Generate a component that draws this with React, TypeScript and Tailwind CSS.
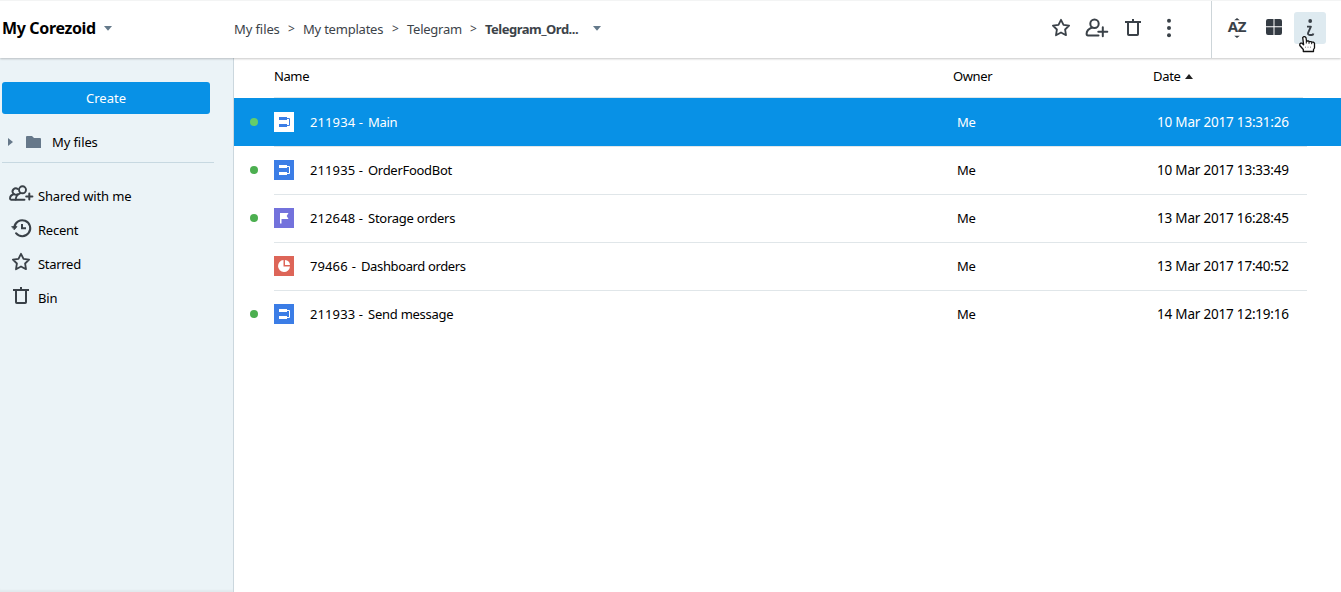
import React from 'react';

type Kind = 'process' | 'state' | 'dashboard';

interface FileRow {
  id: string;
  title: string;
  idClass: string;
  titleClass: string;
  kind: Kind;
  online: boolean;
  date: string;
  selected?: boolean;
}

const rows: FileRow[] = [
  { id: '211934', title: 'Main', idClass: 'w-[58px]', titleClass: 'tracking-[-0.3px]', kind: 'process', online: true, date: '10 Mar 2017 13:31:26', selected: true },
  { id: '211935', title: 'OrderFoodBot', idClass: 'w-[58px]', titleClass: 'tracking-[-0.3px]', kind: 'process', online: true, date: '10 Mar 2017 13:33:49' },
  { id: '212648', title: 'Storage orders', idClass: 'w-[58px]', titleClass: 'tracking-[-0.25px]', kind: 'state', online: true, date: '13 Mar 2017 16:28:45' },
  { id: '79466', title: 'Dashboard orders', idClass: 'w-[51px]', titleClass: 'tracking-[-0.37px]', kind: 'dashboard', online: false, date: '13 Mar 2017 17:40:52' },
  { id: '211933', title: 'Send message', idClass: 'w-[58px]', titleClass: 'tracking-[-0.25px]', kind: 'process', online: true, date: '14 Mar 2017 12:19:16' },
];

const stroke = {
  fill: 'none',
  stroke: '#3a4148',
  strokeWidth: 2,
  strokeLinecap: 'round' as const,
  strokeLinejoin: 'round' as const,
};

function Caret({ className }: { className: string }) {
  return (
    <svg className={className} width="8" height="5" viewBox="0 0 8 5">
      <path d="M0 0h8L4 4.8z" fill="#64798a" />
    </svg>
  );
}

function StarIcon() {
  return (
    <svg width="20" height="20" viewBox="0 0 20 20" {...stroke} strokeWidth={1.8}>
      <path d="M10 1.8l2.5 5 5.6.8-4 3.9.9 5.7-5-2.7-5 2.7.9-5.7-4-3.9 5.600-.8z" />
    </svg>
  );
}

function BinIcon() {
  return (
    <svg width="18" height="20" viewBox="0 0 18 20" {...stroke} strokeLinecap="butt">
      <path d="M1 4h16M9 1v3" />
      <path d="M4 4v12.200a.8.8 0 0 0 .8.8h8.400a.8.8 0 0 0 .8-.8V4" />
    </svg>
  );
}

function UserPlusIcon() {
  return (
    <svg width="24" height="20" viewBox="0 0 24 20" {...stroke}>
      <circle cx="9.500" cy="5.800" r="4.200" />
      <path d="M7 9.500C3.500 11 1.600 13.200 1.600 15.800c0 1.200.4 1.700 1.400 1.700h10.500" />
      <path d="M17.800 9.200v9M13.300 13.700h9" />
    </svg>
  );
}

function SharedIcon() {
  return (
    <svg width="26" height="18" viewBox="0 0 26 18" {...stroke} strokeWidth={1.9}>
      <circle cx="14.500" cy="4.800" r="3.500" />
      <path d="M9.800 4A3.200 3.200 0 1 0 9.500 9.200" />
      <path d="M6 9C3.500 9.800 2 11.500 2 13.500c0 .8.3 1.200 1.100 1.200h13.400" />
      <path d="M12.500 8.200c-2.700 1-4.500 2.600-4.800 6.300" />
      <path d="M21.300 8.600v6M18.200 11.600h6.200" strokeWidth="2" />
    </svg>
  );
}

function RecentIcon() {
  return (
    <svg width="22" height="20" viewBox="0 0 22 20" {...stroke}>
      <path d="M3.300 9.300A8 8 0 1 1 5 15.200" />
      <path d="M11 6v4.300h4" strokeLinecap="butt" strokeLinejoin="miter" />
      <path d="M1 8.600h5L3.500 11.600z" fill="#3a4148" strokeWidth=".8" />
    </svg>
  );
}

function SortIcon() {
  return (
    <div className="relative flex h-5 w-5 items-center justify-center">
      <span className="pb-[3px] font-['Noto_Sans','Open_Sans',sans-serif] text-[15px] leading-5 font-bold tracking-[-0.2px] text-[#3a4148]">AZ</span>
      <svg className="absolute inset-0" width="20" height="20" viewBox="0 0 20 20" fill="#3a4148">
        <path d="M7.200 2.300L10 0l2.800 2.300zM7.200 17.700h5.600L10 20z" />
      </svg>
    </div>
  );
}

function GridIcon() {
  return (
    <svg width="16" height="16" viewBox="0 0 16 16" fill="#343b43">
      <path d="M2 0h5.500v7.300H0V2a2 2 0 0 1 2-2zM8.500 0H14a2 2 0 0 1 2 2v5.300H8.500zM0 8.300h7.500V16H2a2 2 0 0 1-2-2zM8.500 8.300H16V14a2 2 0 0 1-2 2H8.500z" />
    </svg>
  );
}

function InfoIcon() {
  return (
    <svg width="10" height="18" viewBox="0 0 10 18" {...stroke}>
      <circle cx="5.200" cy="2" r="1.900" fill="#3a4148" stroke="none" />
      <path d="M2 7.600h3.900L3.200 13.600c-.5 1.500 0 2.400 1.500 2.400h2c1 0 1.500-.4 1.700-1.500" strokeLinecap="butt" strokeWidth="1.900" />
    </svg>
  );
}

function HandCursor() {
  return (
    <svg className="absolute top-6 left-[5px]" width="17" height="17" viewBox="0 0 17 17">
      <path
        d="M3.700 1.500L4.700.7H6L7 1.700 7.500 5h2l.8.600H12l.8.600h1.700l1 1V12l-1 1.500v2H4.300v-2L.8 9.500V8l.8-.8H3l1.600 1.500z"
        fill="#fff"
        stroke="#111"
        strokeWidth="1.300"
        strokeLinejoin="round"
      />
      <path d="M7.300 5v2.500M10 5.600v2.200M12.700 6.200v2" stroke="#111" strokeWidth="1" />
      <path d="M6.500 10.500V12M9 10.500V12M11.500 10.500V12" stroke="#aaa" strokeWidth="1" />
    </svg>
  );
}

function KindIcon({ kind, selected }: { kind: Kind; selected?: boolean }) {
  if (kind === 'process') {
    const bg = selected ? '#fff' : '#3b7de6';
    const fg = selected ? '#3b7de6' : '#fff';
    return (
      <svg width="20" height="20" viewBox="0 0 20 20">
        <path d="M0 0h20v20H0z" fill={bg} />
        <path d="M5 5h8v3H5zM5 12h8v3H5z" fill={fg} />
        <path d="M13 6.500h2.500v7H13" fill="none" stroke={fg} />
      </svg>
    );
  }
  if (kind === 'state') {
    return (
      <svg width="20" height="20" viewBox="0 0 20 20">
        <path d="M0 0h20v20H0z" fill="#7372dc" />
        <path d="M6 5h8.500l-1.800 3 1.800 3H7.500v4.500H6z" fill="#fff" />
      </svg>
    );
  }
  return (
    <svg width="20" height="20" viewBox="0 0 20 20">
      <path d="M0 0h20v20H0z" fill="#dd6558" />
      <path d="M9.500 4v6.500H16A6 6 0 1 1 9.500 4z" fill="#fff" />
      <path d="M11 4a5.500 5.500 0 0 1 5 5h-5z" fill="#fff" />
    </svg>
  );
}

function NavItem({ icon, label, className }: { icon: React.ReactNode; label: string; className: string }) {
  return (
    <li className="flex h-[34px] items-center">
      <span className="flex w-[38px] shrink-0 items-center pb-[5px] pl-2">{icon}</span>
      <span className={className}>{label}</span>
    </li>
  );
}

export default function App() {
  return (
    <div className="flex h-[592px] w-[1341px] flex-col overflow-hidden bg-white font-['Noto_Sans','Open_Sans',sans-serif] text-[13px] leading-5 text-black">
      <header className="z-10 flex h-[58px] shrink-0 border-t border-[#f3f4f4] bg-white shadow-[0_1px_2px_rgba(0,0,0,0.22)]">
        <div className="flex w-[234px] items-center pb-[3px] pl-0.5">
          <span className="text-base font-bold tracking-[-0.35px] whitespace-nowrap">My Corezoid</span>
          <Caret className="ml-2" />
        </div>
        <nav className="flex flex-1 items-center pb-0.5 whitespace-nowrap text-[#3c4349]">
          <span className="w-[54px] tracking-[-0.1px]">My files</span>
          <span className="w-[15px] text-xs">&gt;</span>
          <span className="w-[89px] tracking-[-0.22px]">My templates</span>
          <span className="w-[15px] text-xs">&gt;</span>
          <span className="w-[63px] tracking-[-0.25px]">Telegram</span>
          <span className="w-[15px] text-xs">&gt;</span>
          <span className="w-[108px] font-bold tracking-[-0.5px]">Telegram_Ord...</span>
          <Caret className="mb-px" />
        </nav>
        <div className="flex w-[160px] items-center pb-[3px]">
          <span className="flex w-[34px]"><StarIcon /></span>
          <span className="flex w-[39px]"><UserPlusIcon /></span>
          <span className="flex w-9"><BinIcon /></span>
          <svg width="18" height="20" viewBox="0 0 18 20" fill="#3a4148">
            <circle cx="9" cy="2.800" r="2" /><circle cx="9" cy="10" r="2" /><circle cx="9" cy="17.200" r="2" />
          </svg>
        </div>
        <div className="flex w-[130px] items-center border-l border-[#cdd5d9] pb-[3px] pl-[15px]">
          <span className="flex w-[39px] pb-px"><SortIcon /></span>
          <span className="flex w-7 pb-0.5"><GridIcon /></span>
          <button className="relative flex h-8 w-8 items-center justify-center rounded-[3px] bg-[#deeaf0]">
            <InfoIcon />
            <HandCursor />
          </button>
        </div>
      </header>

      <div className="flex flex-1">
        <aside className="w-[234px] border-r border-[#cbd7de] bg-[#ebf3f7] pt-6 shadow-[inset_0_-3px_2px_-1px_rgba(0,0,0,0.04)]">
          <button className="ml-0.5 flex h-8 w-52 items-center justify-center rounded-[3px] bg-[#0891e6] pb-px text-white">Create</button>
          <div className="ml-0.5 flex h-[49px] w-[212px] items-center border-b border-[#c7d8e1] pt-2 pl-1.5">
            <svg width="5" height="8" viewBox="0 0 5 8"><path d="M0 0l5 4-5 4z" fill="#66788a" /></svg>
            <svg className="ml-[13px]" width="15" height="12" viewBox="0 0 15 12">
              <path d="M0 1a1 1 0 0 1 1-1h5l2 2h6a1 1 0 0 1 1 1v9H0z" fill="#66788a" />
            </svg>
            <span className="ml-[11px] tracking-[-0.1px]">My files</span>
          </div>
          <ul className="pt-4">
            <NavItem icon={<SharedIcon />} label="Shared with me" className="tracking-[-0.15px]" />
            <NavItem icon={<span className="pl-[3px]"><RecentIcon /></span>} label="Recent" className="tracking-[-0.25px]" />
            <NavItem icon={<span className="pl-[3px]"><StarIcon /></span>} label="Starred" className="tracking-[-0.3px]" />
            <NavItem icon={<span className="pl-1"><BinIcon /></span>} label="Bin" className="tracking-[-0.1px]" />
          </ul>
        </aside>

        <main className="flex-1">
          <div className="mr-[38px] ml-10 flex h-10 items-center border-b border-[#dfe7ea] pb-[3px]">
            <span className="w-[679px] tracking-[-0.4px]">Name</span>
            <span className="w-[200px] tracking-[-0.4px]">Owner</span>
            <span className="w-8 tracking-[-0.3px]">Date</span>
            <svg width="8" height="5" viewBox="0 0 8 5"><path d="M0 5h8L4 0z" fill="#222" /></svg>
          </div>
          {rows.map((row) => (
            <div key={row.id} className={`flex h-12 ${row.selected ? 'bg-[#0891e6] text-white' : ''}`}>
              <div className="flex w-10 items-center pl-4">
                {row.online && <span className={`size-2 rounded-full ${row.selected ? 'bg-[#65cd6b]' : 'bg-[#4caf50]'}`} />}
              </div>
              <div className={`flex w-[1033px] items-center whitespace-nowrap ${row.selected ? '' : 'border-t border-[#e0e6e9] pb-px'}`}>
                <KindIcon kind={row.kind} selected={row.selected} />
                <div className="ml-4 flex w-[647px]">
                  <span className={`flex justify-between pr-[5px] ${row.idClass}`}>
                    <span className="tracking-[0.1px]">{row.id}</span>
                    <span>-</span>
                  </span>
                  <span className={row.titleClass}>{row.title}</span>
                </div>
                <span className="w-[200px] tracking-[-0.2px]">Me</span>
                <span className="text-[13.5px] tracking-[-0.2px]">{row.date}</span>
              </div>
            </div>
          ))}
        </main>
      </div>
    </div>
  );
}
